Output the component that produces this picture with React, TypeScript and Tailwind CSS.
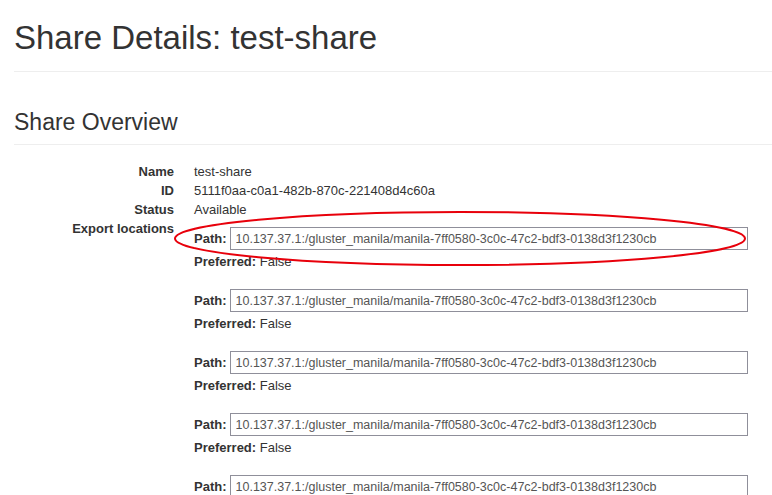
import React from 'react';

const exportPath = '10.137.37.1:/gluster_manila/manila-7ff0580-3c0c-47c2-bdf3-0138d3f1230cb';

const ExportLocation: React.FC<{ path: string; first?: boolean }> = ({ path, first = false }) => (
  <div className={first ? 'pt-[8px]' : 'pt-[18px]'}>
    <div className="flex items-center">
      <span className="font-bold mr-[3px]">Path:</span>
      <input
        readOnly
        value={path}
        className="w-[518px] h-[23px] px-[5px] border border-[#8f8f9a] text-[12.5px] text-[#555] bg-white outline-none"
      />
    </div>
    <div className="mt-[2px] leading-[19px]">
      <span className="font-bold">Preferred:</span> False
    </div>
  </div>
);

const rows: [string, string][] = [
  ['Name', 'test-share'],
  ['ID', '5111f0aa-c0a1-482b-870c-221408d4c60a'],
  ['Status', 'Available'],
];

export default function App() {
  return (
    <div className="relative w-[772px] h-[495px] overflow-hidden bg-white pl-[14px] text-[#333] font-['Liberation_Sans',Arial,sans-serif]">
      {/* page header */}
      <div className="pt-[17px] pb-[13px] border-b border-[#eee]">
        <h1 className="text-[33px] leading-[41px] font-normal">Share Details: test-share</h1>
      </div>

      {/* overview */}
      <h2 className="mt-[37px] text-[23px] leading-[27px] font-normal pb-[8px] border-b border-[#eee]">
        Share Overview
      </h2>

      <dl className="mt-[17px] text-[13px] leading-[19px]">
        {rows.map(([k, v]) => (
          <div key={k} className="flex">
            <dt className="w-[160px] text-right font-bold">{k}</dt>
            <dd className="ml-[20px]">{v}</dd>
          </div>
        ))}
        <div className="flex">
          <dt className="w-[160px] text-right font-bold">Export locations</dt>
          <dd className="ml-[20px]">
            {[0, 1, 2, 3, 4].map((i) => (
              <ExportLocation key={i} path={exportPath} first={i === 0} />
            ))}
          </dd>
        </div>
      </dl>

      {/* annotation ring */}
      <svg className="absolute left-0 top-0 pointer-events-none" width="772" height="495">
        <ellipse cx="460" cy="238.5" rx="285" ry="26.5" fill="none" stroke="#e8000b" strokeWidth="2" />
      </svg>
    </div>
  );
}
